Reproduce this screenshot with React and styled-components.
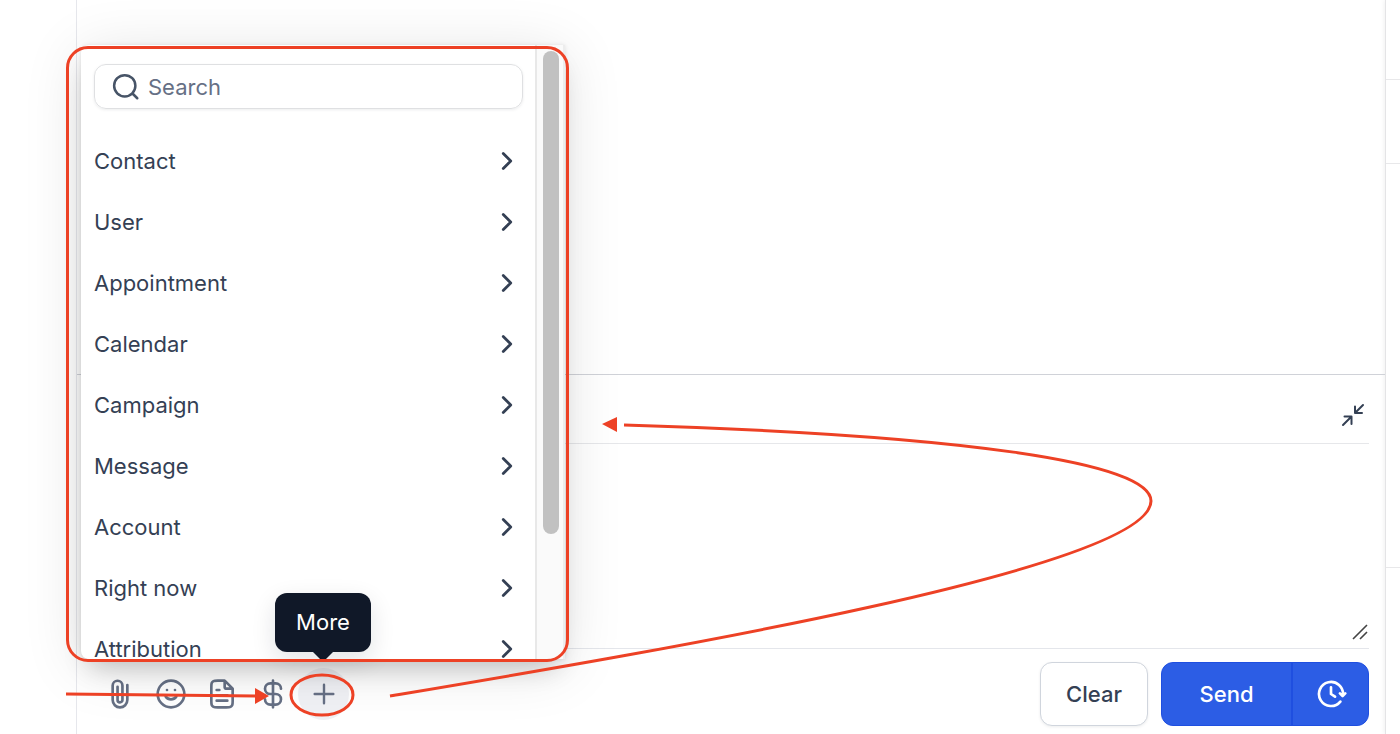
import React from "react";

//packages
import styled, { createGlobalStyle } from "styled-components";

const fields = [
    "Contact",
    "User",
    "Appointment",
    "Calendar",
    "Campaign",
    "Message",
    "Account",
    "Right now",
    "Attribution",
];

const tools = [
    {
        label: "Attach file",
        path: "M17.5 5.256V16.5a5.5 5.5 0 0 1-11 0V5.667a3.667 3.667 0 0 1 7.333 0v10.779a1.833 1.833 0 0 1-3.666 0V6.651",
    },
    {
        label: "Emoji",
        path: "M8 14s1.5 2 4 2 4-2 4-2M15 9h.01M9 9h.01M22 12a10 10 0 1 1-20 0 10 10 0 0 1 20 0Z",
    },
    {
        label: "Templates",
        path: "M14 2.27V6.4c0 .56 0 .84.109 1.054a1 1 0 0 0 .437.437C14.76 8 15.04 8 15.6 8h4.13M16 13H8M16 17H8M10 9H8M14 2H8.8c-1.68 0-2.52 0-3.162.327a3 3 0 0 0-1.311 1.311C4 4.28 4 5.12 4 6.8v10.4c0 1.68 0 2.52.327 3.162a3 3 0 0 0 1.311 1.311C6.28 22 7.12 22 8.8 22h6.4c1.68 0 2.52 0 3.162-.327a3 3 0 0 0 1.311-1.311C20 19.72 20 18.88 20 17.2V8l-6-6Z",
    },
    {
        label: "Payment",
        path: "M6 16a4 4 0 0 0 4 4h4a4 4 0 0 0 0-8h-4a4 4 0 0 1 0-8h4a4 4 0 0 1 4 4M12 2v20",
    },
];

function Icon({ path, size = 32, stroke = 2 }) {
    return (
        <Svg
            width={size}
            height={size}
            viewBox="0 0 24 24"
            strokeWidth={stroke}
            aria-hidden="true"
        >
            <path d={path} />
        </Svg>
    );
}

function FieldMenu() {
    return (
        <Menu>
            <MenuBody>
                <SearchBox>
                    <Icon
                        path="m21 21-4-4m2.500-6a8.5 8.5 0 1 1-17 0 8.5 8.5 0 0 1 17 0Z"
                        size={30}
                    />
                    <SearchInput
                        type="text"
                        placeholder="Search"
                        aria-label="Search"
                    />
                </SearchBox>
                <FieldList>
                    {fields.map((field) => (
                        <FieldItem key={field}>
                            <FieldButton type="button">
                                {field}
                                <Icon
                                    path="m9 18 6-6-6-6"
                                    size={30}
                                    stroke={2.2}
                                />
                            </FieldButton>
                        </FieldItem>
                    ))}
                </FieldList>
            </MenuBody>
            <Track>
                <Thumb />
            </Track>
        </Menu>
    );
}

function App() {
    return (
        <>
            <GlobalStyle />
            <Page>
                <Rail />
                <Main>
                    <Thread />
                    <Composer>
                        <ComposerTop>
                            <PlainButton type="button" aria-label="Collapse">
                                <Icon
                                    path="M14 3.5V10h7M14 10l8-8M3.5 13.5h7V21M10.500 13.500L2 22"
                                    size={24}
                                />
                            </PlainButton>
                        </ComposerTop>
                        <Editor>
                            <TextArea aria-label="Message text" />
                            <Grip
                                width="16"
                                height="16"
                                viewBox="0 0 16 16"
                                aria-hidden="true"
                            >
                                <path d="M1 15 15 1M8 15l7-7" />
                            </Grip>
                        </Editor>
                        <Footer>
                            <Tools>
                                {tools.map((tool) => (
                                    <ToolButton
                                        key={tool.label}
                                        type="button"
                                        aria-label={tool.label}
                                    >
                                        <Icon path={tool.path} />
                                    </ToolButton>
                                ))}
                                <ToolButton
                                    type="button"
                                    aria-label="More"
                                    $active
                                >
                                    <Icon path="M12 5v14M5 12h14" stroke={1.8} />
                                </ToolButton>
                            </Tools>
                            <Actions>
                                <ClearButton type="button">Clear</ClearButton>
                                <SendGroup>
                                    <SendButton type="button">Send</SendButton>
                                    <ScheduleButton
                                        type="button"
                                        aria-label="Schedule"
                                    >
                                        <Icon path="m22.7 11.500-2 2-2-2M20.945 13A9 9 0 1 0 19 17.657M12 7v5l3 2" />
                                    </ScheduleButton>
                                </SendGroup>
                            </Actions>
                        </Footer>
                    </Composer>
                    <FieldMenu />
                    <Tooltip role="tooltip">More</Tooltip>
                </Main>
                <Side>
                    <SideBlock $height={80} />
                    <SideBlock $height={84} />
                    <SideBlock $height={404} />
                </Side>
                <Frame />
                <Marks
                    width="1160"
                    height="734"
                    viewBox="0 0 1160 734"
                    aria-hidden="true"
                >
                    <path d="M66 694 258 696" />
                    <path className="head" d="M269 696 255 688V704Z" />
                    <ellipse cx="322" cy="695" rx="31" ry="20" />
                    <path d="M390 696C640 654 1151 569 1151 501C1151 462 960 435 624 425" />
                    <path className="head" d="M602 424 617 417V432Z" />
                </Marks>
            </Page>
        </>
    );
}

const GlobalStyle = createGlobalStyle`
    * {
        box-sizing: border-box;
    }
    body {
        margin: 0;
        background: #fff;
        color: #344054;
        font-family: Inter, "Liberation Sans", sans-serif;
        font-size: 22px;
        line-height: 32px;
    }
    button,
    input,
    textarea {
        font: inherit;
        color: inherit;
    }
    button {
        margin: 0;
        padding: 0;
        border: none;
        background: none;
        cursor: pointer;
    }
`;
const Page = styled.div`
    position: relative;
    display: flex;
    min-height: 100vh;
    overflow: hidden;
`;
const Svg = styled.svg`
    display: block;
    flex: none;
    fill: none;
    stroke: currentColor;
    stroke-linecap: round;
    stroke-linejoin: round;
`;
const Rail = styled.aside`
    flex: none;
    width: 76px;
`;
const Main = styled.main`
    position: relative;
    flex: 1;
    min-width: 0;
    display: flex;
    flex-direction: column;
    border-left: 1px solid #e6e7ec;
`;
const Thread = styled.section`
    flex: 1;
`;
const Composer = styled.section`
    padding: 0 16px 8px;
    border-top: 1px solid #d0d2d8;
`;
const ComposerTop = styled.div`
    display: flex;
    justify-content: flex-end;
    align-items: center;
    height: 69px;
    padding: 12px 4px 0 0;
    border-bottom: 1px solid #e6e7ea;
`;
const PlainButton = styled.button`
    color: #344054;
`;
const Editor = styled.div`
    position: relative;
    display: flex;
    border-bottom: 1px solid #e4e6eb;
`;
const TextArea = styled.textarea`
    width: 100%;
    height: 204px;
    padding: 12px;
    border: none;
    outline: none;
    resize: none;
    background: none;
`;
const Grip = styled.svg`
    position: absolute;
    right: 1px;
    bottom: 8px;
    fill: none;
    stroke: #444;
    stroke-width: 1.6;
`;
const Footer = styled.div`
    display: flex;
    justify-content: space-between;
    align-items: center;
    padding-top: 13px;
`;
const Tools = styled.div`
    display: flex;
    padding-left: 1px;
`;
const ToolButton = styled.button`
    display: flex;
    align-items: center;
    justify-content: center;
    width: 51px;
    height: 52px;
    border-radius: 50%;
    background: ${(props) => (props.$active ? "#f0f1f5" : "none")};
    color: #667085;
`;
const Actions = styled.div`
    display: flex;
    gap: 13px;
`;
const ClearButton = styled.button`
    width: 108px;
    height: 64px;
    border: 1px solid #d0d5dd;
    border-radius: 12px;
    background: #fff;
    box-shadow: 0 1px 3px rgba(16, 24, 40, 0.08);
    font-weight: 500;
`;
const SendGroup = styled.div`
    display: flex;
    height: 64px;
    border: 1px solid #1f4fe0;
    border-radius: 12px;
    overflow: hidden;
    background: #2c5de5;
    color: #fff;
`;
const SendButton = styled.button`
    width: 129px;
    font-weight: 500;
`;
const ScheduleButton = styled.button`
    display: flex;
    align-items: center;
    justify-content: center;
    width: 77px;
    border-left: 2px solid #1f4fe0;
`;
const Side = styled.aside`
    flex: none;
    width: 15px;
    border-left: 1px solid #e4e4e6;
    box-shadow: -1px 0 4px rgba(0, 0, 0, 0.06);
`;
const SideBlock = styled.div`
    height: ${(props) => props.$height}px;
    border-bottom: 1px solid #e8e8ea;
`;
const Menu = styled.div`
    position: absolute;
    left: 4px;
    bottom: 75px;
    display: flex;
    width: 484px;
    height: 614px;
    overflow: hidden;
    border-radius: 8px 0 0 8px;
    background: #fff;
    box-shadow: 0 0 4px rgba(0, 0, 0, 0.1), 0 16px 24px -8px rgba(0, 0, 0, 0.2),
        0 8px 60px rgba(0, 0, 0, 0.12);
`;
const MenuBody = styled.div`
    flex: 1;
    padding: 19px 12px 0 13px;
`;
const SearchBox = styled.label`
    display: flex;
    align-items: center;
    gap: 7px;
    height: 45px;
    padding: 0 16px;
    border: 1px solid #dfe0e2;
    border-radius: 12px;
    box-shadow: 0 1px 3px rgba(16, 24, 40, 0.08);
    color: #475467;
`;
const SearchInput = styled.input`
    flex: 1;
    min-width: 0;
    padding: 0;
    border: none;
    outline: none;
    background: none;
    &::placeholder {
        color: #667085;
        opacity: 1;
    }
`;
const FieldList = styled.ul`
    display: grid;
    grid-template-rows: repeat(9, 1fr);
    height: 548px;
    margin: 22px 0 0;
    padding: 0;
    list-style: none;
`;
const FieldItem = styled.li`
    display: flex;
`;
const FieldButton = styled.button`
    display: flex;
    align-items: center;
    justify-content: space-between;
    width: 100%;
    padding-right: 1px;
    line-height: 22px;
    text-align: left;
`;
const Track = styled.div`
    flex: none;
    width: 30px;
    padding: 6px;
    border-left: 2px solid #e8e8e8;
    border-right: 2px solid #ededed;
    background: #fafafa;
`;
const Thumb = styled.div`
    width: 16px;
    height: 483px;
    border-radius: 8px;
    background: #c1c1c1;
`;
const Tooltip = styled.div`
    position: absolute;
    left: 198px;
    bottom: 82px;
    width: 96px;
    padding: 13px 0 14px;
    border-radius: 12px;
    background: #101828;
    box-shadow: 0 8px 24px rgba(16, 24, 40, 0.12);
    color: #fff;
    text-align: center;
    &::after {
        content: "";
        position: absolute;
        top: 100%;
        left: 38px;
        border: 10px solid transparent;
        border-top-color: #101828;
        border-bottom: none;
    }
`;
const Frame = styled.div`
    position: absolute;
    left: 66px;
    bottom: 72px;
    width: 503px;
    height: 616px;
    border: 3px solid #ed4125;
    border-radius: 22px;
    pointer-events: none;
`;
const Marks = styled.svg`
    position: absolute;
    left: 0;
    bottom: 0;
    fill: none;
    stroke: #ed4125;
    stroke-width: 3;
    pointer-events: none;
    .head {
        fill: #ed4125;
        stroke: none;
    }
`;
export default App;
